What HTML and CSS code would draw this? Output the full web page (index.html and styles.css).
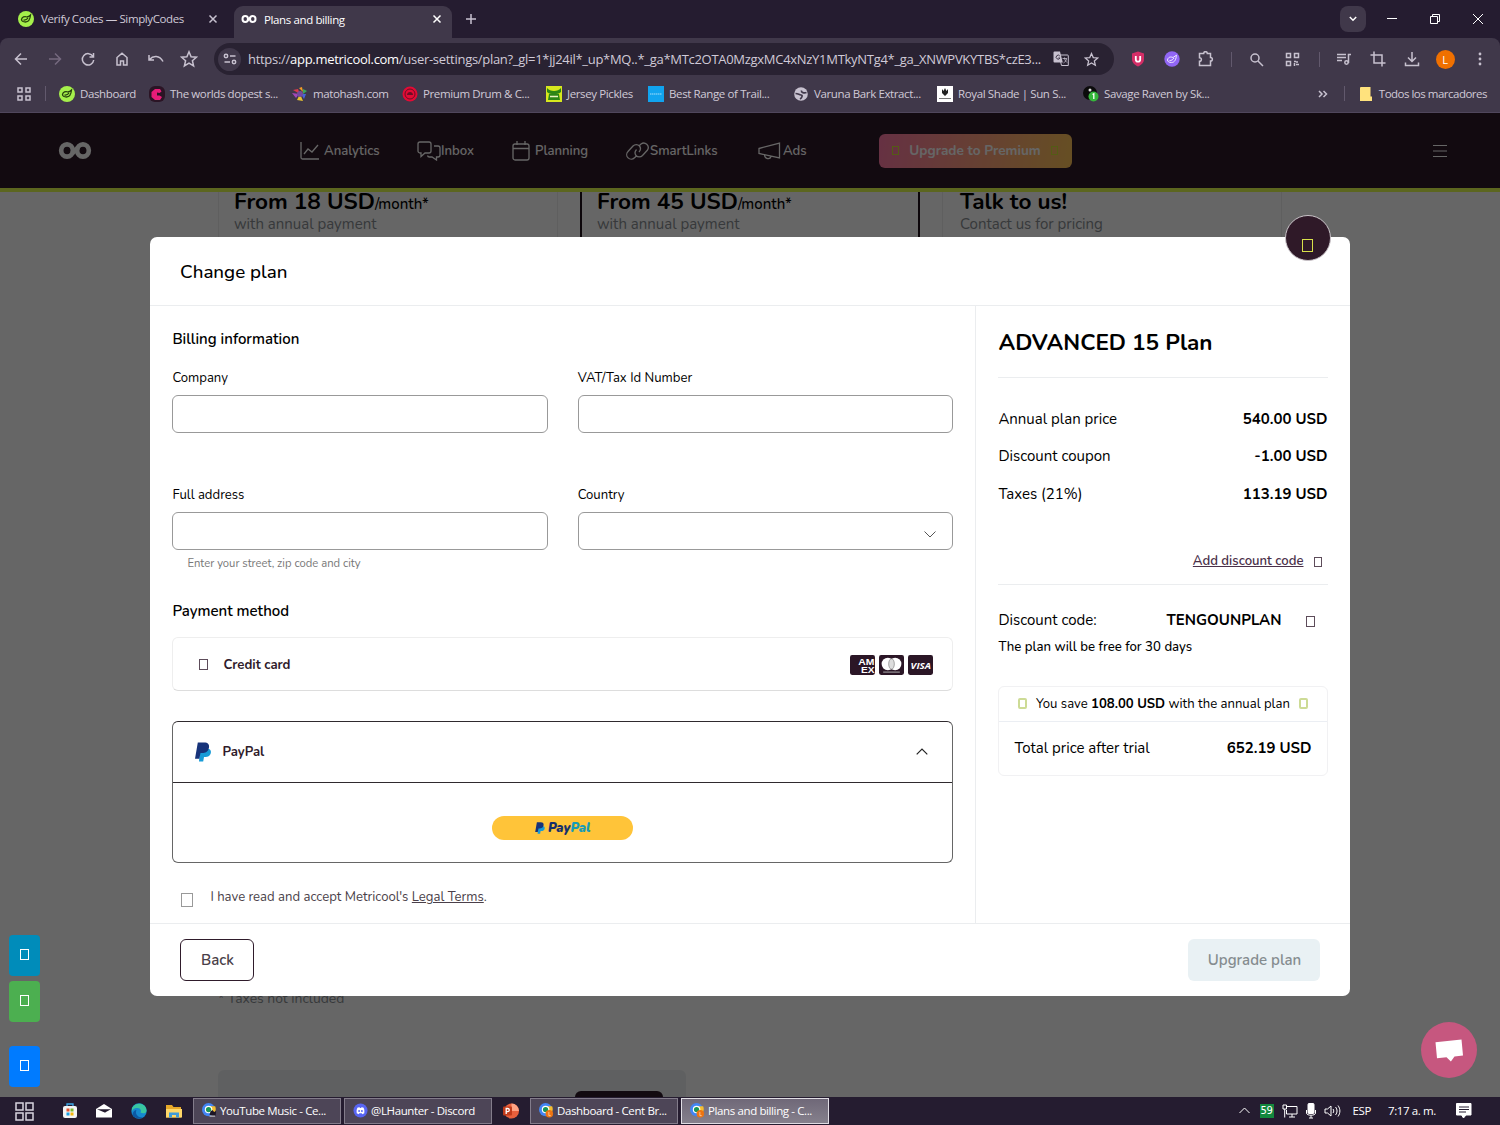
FILE: index.html
```html
<!DOCTYPE html>
<html lang="en">
<head>
  <meta charset="UTF-8">
  <title>Plans and billing</title>
  <link rel="stylesheet" href="styles.css">
</head>
<body>
  <svg class="defs">
    <symbol id="i-close" viewBox="0 0 10 10"><path d="M1.5 1.5l7 7M8.500 1.500l-7 7"/></symbol>
    <symbol id="i-star" viewBox="0 0 18 18"><path d="M9 1.800l2.100 4.900 5.300.5-4 3.500 1.200 5.200L9 13.100l-4.600 2.800 1.200-5.200-4-3.500 5.300-.5z"/></symbol>
    <symbol id="i-leaf" viewBox="0 0 16 16"><circle cx="8" cy="8" r="8" fill="#a5f04b"/><path d="M3.500 8.500c.5-2.500 3-3.500 5.500-2.500 1-.2 2.500-1 3.500-2-.3 3-1.500 7-5 7-2.500 0-4-1-4-2.500zM5.500 9c2 .3 3.500-.5 4.500-2" fill="none" stroke="#27420c" stroke-width="1.300"/></symbol>
    <symbol id="i-loop" viewBox="0 0 32 16"><g fill="none"><ellipse cx="8.500" cy="8" rx="5.500" ry="5.800"/><ellipse cx="23.500" cy="8" rx="5.500" ry="5.800"/><path d="M13 11l6-6"/></g></symbol>
    <symbol id="i-paypal" viewBox="0 0 16 20"><path d="M5 7h9c2 1 2.300 3 1.500 5-.8 2-2.500 3-5 3H9l-.8 4.500H4z" fill="#179bd7"/><path d="M2.800.5H9c4 0 5.700 2 4.900 5.500C13 9.800 10.500 11 7 11H5.500L4.300 16.800H0z" fill="#17337a"/></symbol>
    <symbol id="i-cent" viewBox="0 0 16 16"><circle cx="7" cy="7" r="7" fill="#4285f4"/><path d="M7 3.500h7A7 7 0 0 1 10 13z" fill="#f5bd2f"/><circle cx="7" cy="7" r="4" fill="#fff"/><circle cx="7" cy="7" r="2.800" fill="#189657"/></symbol>
  </svg>

  <!-- tabs -->
  <header class="tabs">
    <div class="tab">
      <svg class="fav"><use href="#i-leaf"/></svg>
      <span>Verify Codes — SimplyCodes</span>
      <svg class="line close"><use href="#i-close"/></svg>
    </div>
    <div class="tab active">
      <svg class="fav loop"><use href="#i-loop"/></svg>
      <span>Plans and billing</span>
      <svg class="line close"><use href="#i-close"/></svg>
    </div>
    <svg class="line plus" viewBox="0 0 10 10"><path d="M5 0v10M0 5h10"/></svg>
    <div class="window-buttons">
      <div class="tab-search"><svg class="line" width="8" height="6" viewBox="0 0 8 6"><path d="M.8 1L4 4.200 7.200 1"/></svg></div>
      <svg class="thin" width="10" height="10" viewBox="0 0 10 10"><path d="M0 4.500h10"/></svg>
      <svg class="thin" width="10" height="10" viewBox="0 0 10 10"><path d="M.5 2.500h7v7h-7zM2.500 2.500v-2h7v7h-2"/></svg>
      <svg class="thin" width="10" height="10" viewBox="0 0 10 10"><path d="M0 0l10 10M10 0L0 10"/></svg>
    </div>
  </header>

  <!-- address bar -->
  <div class="toolbar">
    <div class="nav-icons">
      <svg class="line" viewBox="0 0 18 18"><path d="M15 9H4M9 3.500L3.500 9 9 14.500"/></svg>
      <svg class="line dim" viewBox="0 0 18 18"><path d="M3 9h11M9 3.500L14.500 9 9 14.500"/></svg>
      <svg class="line" viewBox="0 0 18 18"><path d="M14 6.500A5.700 5.700 0 1 0 14.700 10M14.500 3v4h-4"/></svg>
      <svg class="line" viewBox="0 0 18 18"><path d="M4 15V7.500L9 3.200l5 4.300V15h-3.500v-4h-3v4z"/></svg>
      <svg class="line" viewBox="0 0 18 18"><path d="M2 5v5h5M2.500 9.500c3.500-4 10-4.500 13.500 2"/></svg>
      <svg class="line" viewBox="0 0 18 18"><use href="#i-star"/></svg>
    </div>
    <div class="url">
      <div class="site-info"><svg class="line" width="14" height="12" viewBox="0 0 14 12"><circle cx="3" cy="3" r="1.700"/><path d="M7 3h5.500M1.500 9H7"/><circle cx="11" cy="9" r="1.700"/></svg></div>
      <span class="url-text">https://<b>app.metricool.com</b>/user-settings/plan?_gl=1*jj24il*_up*MQ..*_ga*MTc2OTA0MzgxMC4xNzY1MTkyNTg4*_ga_XNWPVKYTBS*czE3...</span>
      <svg class="translate" width="16" height="16" viewBox="0 0 16 16"><path d="M6 4h8.500a.8.800 0 0 1 .8.800v9.700H8.500L6 4z" fill="none" stroke="#c7c1cf"/><path d="M1.500.5h5.500l2.800 11H1.500a1 1 0 0 1-1-1v-9a1 1 0 0 1 1-1z" fill="#c7c1cf"/><path d="M6.800 5A2 2 0 1 0 7 7H5.300" fill="none" stroke="#40384a"/><path d="M9.500 7.500h4.500M11.500 6.500v1c.5 2 1.500 3 2.500 4M13.500 8c-.5 2-1.500 3-3 4" fill="none" stroke="#c7c1cf" stroke-width=".8"/></svg>
      <svg class="line" width="15" height="15"><use href="#i-star"/></svg>
    </div>
    <div class="extensions">
      <svg width="16" height="16" viewBox="0 0 16 16"><path d="M8 .5l6 2v5.500c0 4-3 6-6 7.500-3-1.500-6-3.500-6-7.500V2.500z" fill="#d42e67"/><path d="M5.800 5v3.500a2.200 2.200 0 0 0 4.400 0V5" fill="none" stroke="#fff" stroke-width="1.800"/></svg>
      <svg width="16" height="16" viewBox="0 0 16 16"><circle cx="8" cy="8" r="7.700" fill="#9166f5"/><path d="M3.500 9c.5-3 3-3.500 5.500-2.500l3.500-2.300C12 8 11 11.500 7.500 11.500c-2.500 0-4-1-4-2.500zM5.500 9.500c2 .3 3.500-1 4.500-2.500" fill="none" stroke="#efe8ff"/></svg>
      <svg class="line" width="16" height="16" viewBox="0 0 16 16"><path d="M1.500 2.500h4.200c0-2.500 3.600-2.500 3.600 0h3.200v4c2.500 0 2.500 3.600 0 3.600v4.400h-11v-4.200c2.500 0 2.500-3.600 0-3.600z"/></svg>
      <i class="sep"></i>
      <svg class="line" width="15" height="15" viewBox="0 0 15 15"><circle cx="6" cy="6" r="4"/><path d="M9 9l5 5"/></svg>
      <svg class="line" width="15" height="15" viewBox="0 0 15 15"><path d="M1.500 1.500h4v4h-4zM9.500 1.500h4v4h-4zM1.500 9.500h4v4h-4zM9 9.500h2M12 9v2M9.500 11v3M11 12.500h3"/></svg>
      <i class="sep"></i>
      <svg class="line" width="16" height="16" viewBox="0 0 16 16"><path d="M1 3.500h9M1 6.500h9M1 9.500h5M15 3.500h-2.500V12"/><circle cx="10.500" cy="11.500" r="1.700"/></svg>
      <svg class="line" width="16" height="16" viewBox="0 0 16 16"><path d="M4 .5V12h11.500M.5 4H12v11.500"/></svg>
      <svg class="line" width="16" height="16" viewBox="0 0 16 16"><path d="M8 1v9M4 6.500l4 4 4-4M1.500 11.500v3h13v-3"/></svg>
      <div class="avatar">L</div>
      <svg width="4" height="16" viewBox="0 0 4 16" fill="#c7c1cf"><circle cx="2" cy="3" r="1.400"/><circle cx="2" cy="8" r="1.400"/><circle cx="2" cy="13" r="1.400"/></svg>
    </div>
  </div>

  <!-- bookmarks -->
  <div class="bookmarks">
    <svg class="line apps" viewBox="0 0 14 14"><path d="M1 1h4v4H1zM9 1h4v4H9zM1 9h4v4H1zM9 9h4v4H9z"/></svg>
    <i class="sep"></i>
    <div class="marks">
      <div><svg class="fav"><use href="#i-leaf"/></svg><span>Dashboard</span></div>
      <div><svg class="fav" viewBox="0 0 16 16"><rect width="16" height="16" rx="6" fill="#2b1425"/><path d="M11 3H6L2.500 6v5L6 14h5l2-3-2.500-1.500H8v-3l2.500.5 2-1.500z" fill="#e71c78"/></svg><span>The worlds dopest s...</span></div>
      <div><svg class="fav" viewBox="0 0 16 16"><path d="M7 2l3-1 1 5z" fill="#f29b25"/><path d="M11 3l4 2-4 3z" fill="#3da75b"/><path d="M1 4l5-1 2 5z" fill="#d83c4c"/><path d="M0 7l7 1-3 4z" fill="#a048b9"/><path d="M5 14l3-6 3 7z" fill="#e7c32f"/><path d="M9 8l5 0-2 5z" fill="#4664d9"/><circle cx="8" cy="8" r="3" fill="#744b9d"/></svg><span>matohash.com</span></div>
      <div><svg class="fav" viewBox="0 0 16 16"><circle cx="8" cy="8" r="7.500" fill="#e30b35"/><circle cx="8" cy="8" r="5" fill="none" stroke="#6b0e25"/><path d="M5 9c0-4 6-4 6 0z" fill="#6b0e25"/></svg><span>Premium Drum &amp; C...</span></div>
      <div><svg class="fav" viewBox="0 0 16 16"><rect width="16" height="16" fill="#d7e81e"/><path d="M1 2c3 4 11 4 14 0v4c-3 3-11 3-14 0zM3 8h10l1 6H2z" fill="#2c8616"/><path d="M4 10.500h8" stroke="#e9f3c1" stroke-width="1.500"/></svg><span>Jersey Pickles</span></div>
      <div><svg class="fav" viewBox="0 0 16 16"><rect width="16" height="16" fill="#11a4ef"/><path d="M2 8h12" stroke="#a5defa" stroke-dasharray="1.500 .5"/></svg><span>Best Range of Trail...</span></div>
      <div><svg class="fav" viewBox="0 0 16 16"><circle cx="8" cy="8" r="6.800" fill="#c7c1cf"/><path d="M2.500 7.500c3 0 3.500 1.500 5.500 1.500s1 3-1 4M13.500 6.500c-2.500 1-5.500 0-5-2" stroke="#40384a" stroke-width="1.700" fill="none"/></svg><span>Varuna Bark Extract...</span></div>
      <div><svg class="fav" viewBox="0 0 16 16"><rect width="16" height="16" fill="#fff"/><path d="M5 3l1.500 2L8 2l1.500 3L11 3v4l-3 3-3-3z" fill="#222"/><path d="M2 12.500h12" stroke="#777"/></svg><span>Royal Shade | Sun S...</span></div>
      <div><svg class="fav" viewBox="0 0 16 16"><circle cx="7" cy="7" r="7" fill="#0b0b0b"/><circle cx="7" cy="4" r="1.500" fill="#ddd"/><circle cx="10.500" cy="10.500" r="5" fill="#35b83b"/><path d="M9.500 8.500l1.300-.7V13" stroke="#fff" stroke-width="1.300" fill="none"/></svg><span>Savage Raven by Sk...</span></div>
    </div>
    <svg class="line more" viewBox="0 0 10 8"><path d="M1 1l3 3-3 3M5.500 1l3 3-3 3"/></svg>
    <i class="sep"></i>
    <svg class="folder" viewBox="0 0 12 14"><path d="M1 0h9.500v9.500H12V14H0V1a1 1 0 0 1 1-1z" fill="#ffe27d"/></svg>
    <span class="all-marks">Todos los marcadores</span>
  </div>

  <main class="page">
    <nav class="navbar">
      <svg class="logo"><use href="#i-loop"/></svg>
      <div class="menu">
        <a><svg width="20" height="20" viewBox="0 0 20 20"><path d="M1 1v15.500a1.500 1.500 0 0 0 1.500 1.500H19M4 13l4-5 4 3 6-7"/></svg><span>Analytics</span></a>
        <a><svg width="24" height="20" viewBox="0 0 24 20"><path d="M3 1h9a2 2 0 0 1 2 2v7a2 2 0 0 1-2 2H8l-4 3.500V12H3a2 2 0 0 1-2-2V3a2 2 0 0 1 2-2zM17 5h4a2 2 0 0 1 2 2v7a2 2 0 0 1-2 2h-1.500v3L15 16h-2.500a2 2 0 0 1-2-1.500"/></svg><span>Inbox</span></a>
        <a><svg width="18" height="20" viewBox="0 0 18 20"><path d="M3 3h12a2 2 0 0 1 2 2v12a2 2 0 0 1-2 2H3a2 2 0 0 1-2-2V5a2 2 0 0 1 2-2zM1 7.500h16M5 0v4M13 0v4"/></svg><span>Planning</span></a>
        <a><svg width="24" height="18" viewBox="0 0 24 18"><path d="M11 13.500l-2.500 2.300A4.500 4.500 0 0 1 2 9.500l5-5.500a4.500 4.500 0 0 1 6.500 0c1.500 2 1.300 4-.5 6M13 4l2-2a4.500 4.500 0 0 1 6.500 6l-5 5.500a4.500 4.500 0 0 1-6.500 0c-1.500-2-1.300-4 .5-6"/></svg><span>SmartLinks</span></a>
        <a><svg width="23" height="18" viewBox="0 0 23 18"><path d="M1 6.500L21.500 1v15L1 11.500zM6.500 13c.3 4 5.500 5 6.500 1.500"/></svg><span>Ads</span></a>
      </div>
      <div class="premium"><i class="tofu"></i><span>Upgrade to Premium</span><i class="tofu"></i></div>
      <svg class="burger" viewBox="0 0 14 12"><path d="M0 .5h14M0 6h14M0 11.500h14"/></svg>
    </nav>
    <section class="plans">
      <div class="plan"><h2>From 18 USD<small>/month*</small></h2><p>with annual payment</p></div>
      <div class="plan current"><h2>From 45 USD<small>/month*</small></h2><p>with annual payment</p></div>
      <div class="plan contact"><h2>Talk to us!</h2><p>Contact us for pricing</p></div>
    </section>
    <p class="taxes">* Taxes not included</p>
    <div class="addon"><div class="addon-btn"></div></div>

    <div class="overlay"></div>

    <div class="side-buttons">
      <div class="sb teal"><i class="tofu"></i></div>
      <div class="sb green"><i class="tofu"></i></div>
      <div class="sb blue"><i class="tofu"></i></div>
    </div>

    <div class="modal">
      <div class="modal-close"><i class="tofu"></i></div>
      <div class="modal-header">Change plan</div>
      <div class="modal-body">
        <div class="form">
          <h3>Billing information</h3>
          <div class="fields">
            <label>Company<span class="input"></span></label>
            <label>VAT/Tax Id Number<span class="input"></span></label>
            <label>Full address<span class="input"></span><small>Enter your street, zip code and city</small></label>
            <label>Country<span class="input select"><svg width="12" height="7" viewBox="0 0 12 7"><path d="M.5.5L6 6 11.500.5" fill="none" stroke="#555"/></svg></span></label>
          </div>
          <h3 class="pay-title">Payment method</h3>
          <div class="credit">
            <i class="tofu"></i><b>Credit card</b>
            <div class="brands">
              <svg viewBox="0 0 24 19"><rect width="24" height="19" rx="2" fill="#2b1626"/><text x="8" y="9.300" class="amex" textLength="15.500" lengthAdjust="spacingAndGlyphs">AM</text><text x="10.500" y="17" class="amex" textLength="13" lengthAdjust="spacingAndGlyphs">EX</text></svg>
              <svg viewBox="0 0 24 19"><rect width="24" height="19" rx="2" fill="#2b1626"/><circle cx="8.500" cy="8.500" r="6" fill="#fff"/><circle cx="15.500" cy="8.500" r="6" fill="#fff"/><ellipse cx="12" cy="8.500" rx="2.700" ry="5" fill="#ddd" stroke="#888" stroke-width=".7"/><path d="M4 16.300h16" stroke="#aaa"/></svg>
              <svg viewBox="0 0 24 19"><rect width="24" height="19" rx="2" fill="#2b1626"/><text x="2.500" y="13" class="visa" textLength="19.500" lengthAdjust="spacingAndGlyphs">VISA</text></svg>
            </div>
          </div>
          <div class="paypal">
            <div class="paypal-head">
              <svg width="16" height="20"><use href="#i-paypal"/></svg><b>PayPal</b>
              <svg class="chev" width="12" height="7" viewBox="0 0 12 7"><path d="M.7 6.300L6 1l5.300 5.300" fill="none" stroke="#222" stroke-width="1.200"/></svg>
            </div>
            <div class="paypal-body">
              <div class="paypal-btn"><svg width="10" height="12"><use href="#i-paypal"/></svg><b>Pay<em>Pal</em></b></div>
            </div>
          </div>
          <div class="terms"><i class="tofu"></i><span>I have read and accept Metricool's <u>Legal Terms</u>.</span></div>
        </div>
        <aside class="summary">
          <h2>ADVANCED 15 Plan</h2>
          <div class="prices">
            <div><span>Annual plan price</span><b>540.00 USD</b></div>
            <div><span>Discount coupon</span><b>-1.00 USD</b></div>
            <div><span>Taxes (21%)</span><b>113.19 USD</b></div>
          </div>
          <div class="add-code"><u>Add discount code</u><i class="tofu"></i></div>
          <div class="code"><span>Discount code:</span><b>TENGOUNPLAN</b><i class="tofu"></i></div>
          <p class="free">The plan will be free for 30 days</p>
          <div class="total">
            <div class="save"><i class="tofu"></i><span>You save <b>108.00 USD</b> with the annual plan</span><i class="tofu"></i></div>
            <div class="sum"><span>Total price after trial</span><b>652.19 USD</b></div>
          </div>
        </aside>
      </div>
      <div class="modal-footer">
        <button class="back">Back</button>
        <button class="upgrade" disabled>Upgrade plan</button>
      </div>
    </div>

    <div class="chat"><svg width="28" height="23" viewBox="0 0 28 23"><path d="M.5 3.200L26.500.5 28 16.500l-8.500.9-3.600 5-4.400-4.200-9.500 1z" fill="#fff"/></svg></div>
  </main>

  <footer class="taskbar">
    <svg class="start" viewBox="0 0 19 19"><path d="M1 1h7v7H1zM11 1h7v7h-7zM1 11h7v7H1zM11 11h7v7h-7z"/></svg>
    <svg width="14" height="16" viewBox="0 0 14 16"><path d="M4 3V1h6v2" fill="none" stroke="#3da9e8" stroke-width="1.300"/><rect y="3" width="14" height="12" rx="2" fill="#f4f4f4"/><path d="M3.500 5.500h3v3h-3z" fill="#e5502d"/><path d="M7.500 5.500h3v3h-3z" fill="#7db82d"/><path d="M3.500 9.500h3v3h-3z" fill="#1ba0e2"/><path d="M7.500 9.500h3v3h-3z" fill="#f5b70c"/></svg>
    <svg width="16" height="14" viewBox="0 0 16 14"><path d="M0 5l8-5 8 5v8.500H0z" fill="#fff"/><path d="M1 5.200h14L9 8.500l2 1z" fill="#251c30"/></svg>
    <svg width="16" height="16" viewBox="0 0 16 16"><circle cx="8" cy="8" r="7.700" fill="#1689cf"/><path d="M1 5c3-6 14-6 14.500 2.500 0 3-4 3.500-6 2 1.500-3-1-5-4-4.500-2 .2-3.500 1-4.500 3z" fill="#39c6a0"/><path d="M5.500 7c-2 4 2 8.500 7 7-4 2.500-9 1.500-11-2 0-3 2-5 4-5z" fill="#0c59a4"/></svg>
    <svg width="16" height="14" viewBox="0 0 16 14"><path d="M0 1h6l1.500 2H15v10.500H0z" fill="#e7a92a"/><path d="M0 5h16v8.500H0z" fill="#ffd768"/><path d="M3 13.500V8.500h10v5h-3V11H6v2.500z" fill="#3f9bd9"/></svg>
    <div class="task w1"><svg viewBox="0 0 16 16"><use href="#i-cent" width="16" height="16"/><path d="M8 13l1-4 2-1.500 2 2 2-1-.5 5z" fill="#1c1525"/><path d="M8 14h6" stroke="#ddd"/></svg><span>YouTube Music - Ce...</span></div>
    <div class="task w2"><svg viewBox="0 0 16 16"><circle cx="8" cy="8" r="7.500" fill="#5865f2"/><path d="M4 11c-.5-3 0-5 1-6.200l2-.3.5.7h1l.5-.7 2 .3c1 1.200 1.500 3.200 1 6.200l-2 1-.7-1H6.700l-.7 1z" fill="#fff"/><circle cx="6.500" cy="8.500" r="1" fill="#5865f2"/><circle cx="9.500" cy="8.500" r="1" fill="#5865f2"/></svg><span>@LHaunter - Discord</span></div>
    <svg class="ppt" width="16" height="16" viewBox="0 0 16 16"><circle cx="8.500" cy="8" r="7.500" fill="#e8603c"/><path d="M8.500.5A7.500 7.500 0 0 1 16 8H8.500z" fill="#ffa384"/><rect y="3.500" width="9" height="9" rx="1" fill="#c13b1b"/><path d="M3.200 11V5.500h1.500a1.500 1.500 0 0 1 0 3.200H3.200" fill="none" stroke="#fff" stroke-width="1.300"/></svg>
    <div class="task w3"><svg viewBox="0 0 16 16"><use href="#i-cent" width="16" height="16"/><circle cx="11" cy="11.500" r="4" fill="#ee7411"/><path d="M10.500 9.500v4h2" fill="none" stroke="#ffd9b5" stroke-width=".8"/></svg><span>Dashboard - Cent Br...</span></div>
    <div class="task on w4"><svg viewBox="0 0 16 16"><use href="#i-cent" width="16" height="16"/><circle cx="11" cy="11.500" r="4" fill="#ee7411"/><path d="M10.500 9.500v4h2" fill="none" stroke="#ffd9b5" stroke-width=".8"/></svg><span>Plans and billing - C...</span></div>
    <div class="tray">
      <svg class="up" width="11" height="7" viewBox="0 0 11 7"><path d="M.5 6l5-5 5 5"/></svg>
      <span class="temp">59</span>
      <svg width="16" height="14" viewBox="0 0 16 14"><path d="M5 2.500h10v7.500H4.500V6M1 1h3.500v4H1zM2.700 5v8.500M7 13h6M10 10v3"/></svg>
      <svg width="10" height="16" viewBox="0 0 10 16"><rect x="2" y=".5" width="6" height="10" rx="1" fill="#fff"/><path d="M.5 7v3c0 3 9 3 9 0V7M5 12.500V15M3 15h4"/></svg>
      <svg width="17" height="14" viewBox="0 0 17 14"><path d="M1 5h2.500L7 2v10L3.500 9H1zM9 5c1 1.500 1 2.500 0 4M11.500 3c2 2.500 2 5.500 0 8M14 1.500c2.500 3.500 2.500 7.500 0 11"/></svg>
      <span class="lang">ESP</span>
      <span class="clock">7:17 a. m.</span>
      <svg width="16" height="16" viewBox="0 0 16 16"><path d="M.5.5h14.500v11.500h-5L7.500 15 5.500 12h-5z" fill="#fff"/><path d="M3 4h10M3 6.500h10M3 9h7" stroke="#251c30"/></svg>
    </div>
  </footer>
</body>
</html>
```

FILE: styles.css
```css
* {
  box-sizing: border-box;
}

body {
  margin: 0;
  height: 1125px;
  overflow: hidden;
  display: flex;
  flex-direction: column;
  background: #251c30;
  font-family: "Open Sans", sans-serif;
  font-size: 11.5px;
  letter-spacing: -0.38px;
  color: #d0cad7;
}

h2, h3, p {
  margin: 0;
}

svg {
  flex: none;
}

.defs {
  position: absolute;
  width: 0;
  height: 0;
}

.line {
  fill: none;
  stroke: #c7c1cf;
  stroke-width: 1.5;
}

.thin {
  fill: none;
  stroke: #fff;
}

.fav {
  width: 16px;
  height: 16px;
}

.sep {
  width: 1px;
  height: 15px;
  background: #62596d;
}

.tofu {
  display: block;
  flex: none;
  width: 9px;
  height: 11px;
  border: 1px solid #5d4c5a;
}

/* browser tabs */
.tabs {
  height: 38px;
  display: flex;
  align-items: center;
}

.tab {
  display: flex;
  align-items: center;
  width: 234px;
  height: 38px;
  padding: 0 16px 1px 18px;
}

.tab span {
  margin-left: 7px;
  white-space: nowrap;
}

.tab .close {
  width: 10px;
  height: 10px;
  margin-left: auto;
}

.tab.active {
  width: 218px;
  height: 32px;
  margin-top: 6px;
  padding: 0 10px 6px 7px;
  background: #40384a;
  border-radius: 9px 9px 0 0;
  color: #fff;
}

.tab .loop {
  stroke: #fff;
  stroke-width: 4;
}

.tab.active .line {
  stroke: #fff;
}

.plus {
  width: 10px;
  height: 10px;
  margin-left: 14px;
}

.window-buttons {
  margin-left: auto;
  margin-right: 17px;
  display: flex;
  align-items: center;
  gap: 33px;
}

.tab-search {
  width: 26px;
  height: 26px;
  margin-right: -12px;
  border-radius: 8px;
  background: #40384a;
  display: flex;
  align-items: center;
  justify-content: center;
}

.tab-search .line {
  stroke: #fff;
}

/* toolbar */
.toolbar {
  height: 42px;
  background: #40384a;
  display: flex;
  align-items: center;
  padding-left: 12px;
  border-radius: 8px 8px 0 0;
}

.nav-icons {
  display: flex;
  gap: 15.7px;
  width: 202px;
}

.nav-icons svg {
  width: 18px;
  height: 18px;
}

.nav-icons .dim {
  stroke: #75697f;
}

.url {
  width: 900px;
  height: 32px;
  border-radius: 16px;
  background: #292232;
  display: flex;
  align-items: center;
  padding-left: 4px;
}

.site-info {
  width: 23px;
  height: 23px;
  border-radius: 50%;
  background: #40384a;
  display: flex;
  align-items: center;
  justify-content: center;
}

.url-text {
  flex: none;
  width: 812px;
  padding-left: 7px;
  font-size: 13px;
  letter-spacing: -0.29px;
  white-space: nowrap;
}

.url-text b {
  font-weight: normal;
  color: #fff;
}

.translate {
  margin-right: 15px;
}

.extensions {
  display: grid;
  grid-template-columns: 34px 34px 34px 16px 34px 38px 16px 34px 34px 34px 32px 38px;
  align-items: center;
  justify-items: center;
  margin-left: 7px;
}

.avatar {
  width: 19px;
  height: 19px;
  border-radius: 50%;
  background: #f07000;
  color: #fff;
  font-size: 11px;
  line-height: 19px;
  text-align: center;
}

/* bookmarks */
.bookmarks {
  height: 33px;
  background: #40384a;
  border-bottom: 1px solid #50475c;
  display: flex;
  align-items: center;
  padding: 0 13px 5px 17px;
  white-space: nowrap;
}

.apps {
  width: 14px;
  height: 14px;
  margin-right: 14px;
}

.marks {
  flex: 1;
  display: grid;
  grid-template-columns: 90px 143px 110px 144px 102px 145px 144px 146px 160px;
  margin-left: 13px;
}

.marks div {
  display: flex;
  align-items: center;
}

.marks span {
  margin-left: 5px;
}

.more {
  width: 10px;
  height: 8px;
  margin-right: 16px;
}

.folder {
  width: 12px;
  height: 14px;
  margin: 0 7px 0 15px;
}

.all-marks {
  letter-spacing: -0.5px;
}

/* page below the dialog */
.page {
  position: relative;
  flex: 1;
  overflow: hidden;
  background: #fff;
  color: #000;
  font-family: Nunito, Lato, sans-serif;
  font-size: 15px;
  letter-spacing: 0;
}

.navbar {
  height: 79px;
  background: #2f1928;
  border-bottom: 4px solid #e6ff4f;
  display: flex;
  align-items: center;
  color: #fff;
}

.logo {
  width: 34px;
  height: 17px;
  margin-left: 58px;
  stroke: #fff;
  stroke-width: 4.4;
}

.menu {
  display: flex;
  width: 786.5px;
  padding-left: 208px;
  font-size: 13.125px;
  font-weight: 600;
}

.menu a {
  display: flex;
  align-items: center;
  height: 20px;
}

.menu svg {
  fill: none;
  stroke: #fff;
  stroke-width: 1.3;
}

.menu a:nth-child(1) { width: 117px; gap: 4px; }
.menu a:nth-child(2) { width: 95px; }
.menu a:nth-child(3) { width: 114px; gap: 5px; }
.menu a:nth-child(4) { width: 132px; }
.menu a:nth-child(5) { gap: 2px; }

.premium {
  width: 193px;
  height: 34px;
  border-radius: 6px;
  background: linear-gradient(100deg, #ff7aa8, #ffc558);
  display: flex;
  align-items: center;
  justify-content: center;
  gap: 10px;
  font-size: 13.6px;
  font-weight: bold;
}

.premium .tofu {
  width: 7px;
  height: 9px;
  border-color: #d3e635;
}

.burger {
  width: 14px;
  height: 12px;
  margin-left: auto;
  margin-right: 53px;
  stroke: #fff;
}

.plans {
  display: grid;
  grid-template-columns: repeat(3, 340px);
  gap: 22px;
  height: 797px;
  padding-left: 218px;
}

.plan {
  border: solid #eee;
  border-width: 0 1px;
  padding-left: 15px;
}

.plan.current {
  border: solid #1e0f1a;
  border-width: 0 2px;
}

.plan.contact {
  padding-left: 17px;
}

.plan h2 {
  height: 20px;
  font-size: 22.5px;
  line-height: 19px;
}

.plan small {
  font-size: 15px;
  font-weight: 500;
  line-height: 1;
}

.plan p {
  line-height: 24px;
  color: #8a8f94;
}

.taxes {
  padding-left: 218px;
  font-size: 13.9px;
  line-height: 20px;
  color: #8a8f94;
}

.addon {
  margin: 61px 0 0 218px;
  width: 468px;
  height: 60px;
  padding: 21px 23px 0;
  border-radius: 6px;
  background: #eef1f3;
}

.addon-btn {
  width: 88px;
  height: 30px;
  margin-left: auto;
  border-radius: 6px;
  background: #2f1928;
}

.overlay {
  position: absolute;
  inset: 0;
  background: rgba(0, 0, 0, 0.6);
}

.side-buttons {
  position: absolute;
  left: 9px;
  top: 822px;
}

.sb {
  width: 31px;
  height: 41px;
  padding-bottom: 2px;
  margin-bottom: 5px;
  border-radius: 4px;
  display: flex;
  align-items: center;
  justify-content: center;
}

.sb .tofu {
  border-color: #fff;
}

.sb.teal { background: #008cba; }
.sb.green { background: #4caf50; margin-bottom: 24px; }
.sb.blue { background: #007bff; }

/* dialog */
.modal {
  position: absolute;
  left: 150px;
  top: 124px;
  width: 1200px;
  height: 759px;
  border-radius: 7px;
  background: #fff;
  display: flex;
  flex-direction: column;
}

.modal-close {
  position: absolute;
  right: 19px;
  top: -22px;
  width: 46px;
  height: 46px;
  border: 1px solid #c9c3c8;
  border-radius: 50%;
  background: #2f1928;
}

.modal-close .tofu {
  width: 11px;
  height: 13px;
  margin: 23px 0 0 16px;
  border-color: #d8e04a;
}

.modal-header {
  height: 69px;
  padding: 1px 0 0 30px;
  border-bottom: 1px solid #ebedef;
  font-size: 18.75px;
  font-weight: 500;
  line-height: 68px;
}

.modal-body {
  height: 617px;
  display: flex;
}

.form {
  width: 825px;
  padding: 23px 22px 0 22.4px;
}

.form h3 {
  font-size: 15px;
  line-height: 20px;
  font-weight: 600;
}

.fields {
  display: grid;
  grid-template-columns: 1fr 1fr;
  column-gap: 30px;
  grid-template-rows: 117px 116px;
  margin-top: 19px;
}

.fields label {
  font-size: 13.125px;
  line-height: 20px;
}

.input {
  display: block;
  height: 37.5px;
  margin-top: 7px;
  border: 1px solid #999;
  border-radius: 6px;
}

.fields small {
  display: block;
  padding: 4px 0 0 15px;
  font-size: 11.25px;
  color: #777;
}

.select svg {
  display: block;
  margin: 18px 16px 0 auto;
}

.credit {
  height: 54px;
  margin-top: 16px;
  padding: 1px 19px 0 26px;
  border: 1px solid #eee;
  border-bottom-color: #ddd;
  border-radius: 6px;
  display: flex;
  align-items: center;
  font-size: 13.125px;
  color: #2f1b2b;
}

.credit b {
  margin-left: 15px;
}

.brands {
  margin-left: auto;
  display: flex;
  gap: 4px;
}

.brands svg {
  width: 25px;
  height: 20px;
}

.amex {
  font: bold 9.5px "Liberation Sans", sans-serif;
  fill: #fff;
}

.visa {
  font: italic bold 9px "Open Sans", sans-serif;
  fill: #fff;
}

.paypal {
  height: 142px;
  margin-top: 30px;
  border: 1px solid #2f2a2e;
  border-color: #2f2a2e #666 #666;
  border-radius: 6px;
}

.paypal-head {
  height: 61px;
  padding: 0 24px 1px 22px;
  border-bottom: 1px solid #2f2a2e;
  display: flex;
  align-items: center;
  font-size: 13.125px;
  color: #2f1b2b;
}

.paypal-head b {
  margin-left: 11px;
}

.chev {
  margin-left: auto;
}

.paypal-btn {
  width: 141px;
  height: 24px;
  margin: 33px auto 0;
  border-radius: 12px;
  background: #ffc439;
  display: flex;
  align-items: center;
  justify-content: center;
  gap: 3px;
  font: italic 12.8px Nunito, Lato, sans-serif;
  color: #17306b;
}

.paypal-btn b {
  font-weight: 900;
}

.paypal-btn em {
  color: #179bb7;
}

.terms {
  display: flex;
  align-items: center;
  gap: 17px;
  margin-top: 24px;
  padding-left: 9px;
  font-size: 13.125px;
  line-height: 20px;
  color: #4a3f49;
}

.terms .tofu {
  width: 12px;
  height: 14px;
  margin-top: 5px;
  border-color: #999;
}

u {
  text-underline-offset: 1px;
}

/* order summary */
.summary {
  width: 375px;
  padding: 23px 22.5px 0 22.4px;
  border-left: 1px solid #ebedef;
}

.summary h2 {
  height: 49px;
  font-size: 22.5px;
  line-height: 28px;
  border-bottom: 1px solid #ebedef;
}

.prices {
  padding-top: 22px;
}

.prices div {
  height: 37.5px;
  display: flex;
  align-items: center;
  justify-content: space-between;
}

.add-code {
  height: 72px;
  padding: 38px 6px 0 0;
  border-bottom: 1px solid #ebedef;
  display: flex;
  justify-content: flex-end;
  gap: 10px;
  font-size: 13.125px;
  line-height: 20px;
  color: #4a3049;
  font-weight: 600;
}

.add-code .tofu {
  width: 8px;
  height: 10px;
  margin-top: 6px;
}

.code {
  display: flex;
  align-items: center;
  margin-top: 24.5px;
  height: 22px;
}

.code b {
  margin-left: auto;
}

.code .tofu {
  margin: 3px 13px 0 24px;
}

.free {
  margin-top: 5.5px;
  font-size: 13.2px;
  font-weight: 500;
  line-height: 20px;
}

.total {
  height: 90px;
  margin-top: 29px;
  border: 1px solid #f1f1f3;
  border-radius: 6px;
}

.save {
  height: 35px;
  border-bottom: 1px solid #ebeef3;
  display: flex;
  align-items: center;
  justify-content: center;
  gap: 9px;
  font-size: 13.125px;
}

.save .tofu {
  border: 2px solid #cddb96;
  border-radius: 2px;
}

.sum {
  height: 53px;
  padding: 0 15px;
  display: flex;
  align-items: center;
  justify-content: space-between;
}

.modal-footer {
  flex: 1;
  padding: 0 30px;
  border-top: 1px solid #ebedef;
  display: flex;
  align-items: center;
  justify-content: space-between;
}

button {
  height: 42px;
  padding: 0 0 0 1px;
  border: 1px solid #2f1b2b;
  border-radius: 6px;
  background: #fff;
  font: 600 15px Nunito, Lato, sans-serif;
  color: #4a3f49;
}

.back {
  width: 74px;
}

.upgrade {
  width: 132px;
  border: none;
  background: #e9f1f4;
  color: #858c8f;
}

.chat {
  position: absolute;
  left: 1421px;
  top: 909px;
  width: 56px;
  height: 56px;
  border-radius: 50%;
  background: #c6577f;
  display: flex;
  align-items: center;
  justify-content: center;
}

/* taskbar */
.taskbar {
  height: 28px;
  background: #251c30;
  display: flex;
  align-items: center;
  padding-left: 15px;
  gap: 19px;
  color: #fff;
  white-space: nowrap;
}

.start {
  width: 19px;
  height: 19px;
  margin-right: 10px;
  fill: none;
  stroke: #d8d3de;
  stroke-width: 1.5;
}

.task {
  width: 148px;
  height: 26px;
  padding: 0 0 1px 8px;
  border: 1px solid #837c8b;
  background: #4d4557;
  display: flex;
  align-items: center;
  gap: 3px;
}

.task svg {
  width: 15px;
  height: 15px;
}

.task.on {
  background: linear-gradient(#6f6878, #85808c);
  border-color: #e0dde4;
}

.w1 { margin-left: -8px; }
.w2 { margin-left: -16px; }
.ppt { margin: 0 -8px; }
.w4 { margin-left: -16px; }

.tray {
  margin-left: auto;
  margin-right: 28px;
  padding-bottom: 1px;
  display: flex;
  align-items: center;
  gap: 8px;
}

.tray svg {
  fill: none;
  stroke: #fff;
}

.tray .up {
  margin-right: 2px;
}

.temp {
  width: 14px;
  background: #13883e;
  font: 10px/14px "DejaVu Sans", sans-serif;
  text-align: center;
}

.lang {
  margin-left: 4px;
}

.clock {
  margin: 0 12px 0 9px;
}
```
